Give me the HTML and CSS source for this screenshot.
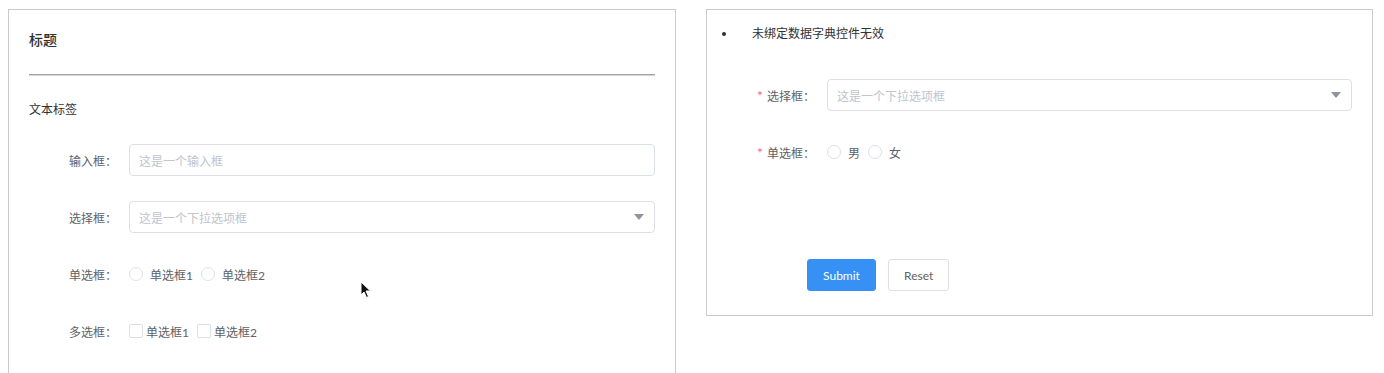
FILE: index.html
```
<!DOCTYPE html>
<html lang="zh-CN">
<head>
    <meta charset="UTF-8">
    <title>表单设计</title>
    <link rel="stylesheet" href="styles.css">
</head>
<body>
    <div class="page">
        <!-- Left: designer form -->
        <div class="panel panel-left">
            <div class="panel-title">标题</div>
            <div class="divider"></div>
            <div class="text-label">文本标签</div>

            <div class="form-item">
                <label class="form-label">输入框：</label>
                <div class="form-control">
                    <div class="input"><span class="placeholder">这是一个输入框</span></div>
                </div>
            </div>
            <div class="form-item">
                <label class="form-label">选择框：</label>
                <div class="form-control">
                    <div class="input select">
                        <span class="placeholder">这是一个下拉选项框</span>
                        <span class="caret"></span>
                    </div>
                </div>
            </div>
            <div class="form-item">
                <label class="form-label">单选框：</label>
                <div class="form-control">
                    <span class="radio"><span class="radio-dot"></span>单选框1</span>
                    <span class="radio"><span class="radio-dot"></span>单选框2</span>
                </div>
            </div>
            <div class="form-item">
                <label class="form-label">多选框：</label>
                <div class="form-control">
                    <span class="check"><span class="check-box"></span>单选框1</span>
                    <span class="check"><span class="check-box"></span>单选框2</span>
                </div>
            </div>
        </div>

        <!-- Right: preview -->
        <div class="panel panel-right">
            <ul class="notes">
                <li><span class="bullet"></span>未绑定数据字典控件无效</li>
            </ul>
            <div class="form-item">
                <label class="form-label"><span class="required">*</span>选择框：</label>
                <div class="form-control">
                    <div class="input select">
                        <span class="placeholder">这是一个下拉选项框</span>
                        <span class="caret"></span>
                    </div>
                </div>
            </div>
            <div class="form-item">
                <label class="form-label"><span class="required">*</span>单选框：</label>
                <div class="form-control">
                    <span class="radio"><span class="radio-dot"></span>男</span>
                    <span class="radio"><span class="radio-dot"></span>女</span>
                </div>
            </div>
            <div class="actions">
                <button class="btn btn-primary">Submit</button>
                <button class="btn">Reset</button>
            </div>
        </div>
    </div>

    <!-- mouse pointer captured in the screenshot -->
    <svg class="cursor" width="12" height="18" viewBox="0 0 12 18">
        <path d="M1 1 L1 14 L4 11 L6.5 16.5 L8.5 15.5 L6 10 L10.5 10 Z" fill="#111" stroke="#fff" stroke-width="1"/>
    </svg>
</body>
</html>
```

FILE: styles.css
```
/* General styling */
body {
    margin: 0;
    padding: 0;
    background-color: #ffffff;
    font-family: Lato, "Noto Sans CJK SC", sans-serif;
    font-size: 12px;
    color: #606266;
    overflow: hidden;
}
.page {
    display: flex;
    align-items: flex-start;
    padding: 9px 0 0 8px;
}
/* Panels */
.panel {
    border: 1px solid #cbcbcb;
    box-sizing: border-box;
}
.panel-left {
    width: 668px;
    padding: 20px 20px 40px 20px;
}
.panel-right {
    width: 667px;
    height: 307px;
    margin-left: 30px;
    padding: 14px 20px 24px 20px;
}
.panel-title {
    font-size: 14px;
    line-height: 20px;
    color: #303133;
    font-weight: 500;
}
.divider {
    border-top: 1px solid #a3a3a3;
    margin: 24px 0 0 0;
    height: 1px;
    background: #d6d6d6;
}
.text-label {
    margin-top: 24px;
    line-height: 20px;
    color: #303133;
}
/* Form rows */
.form-item {
    display: flex;
    align-items: center;
    height: 32px;
    margin-top: 24px;
}
.panel-left .form-item + .form-item {
    margin-top: 25px;
}
.form-label {
    width: 100px;
    box-sizing: border-box;
    text-align: right;
    padding-right: 12px;
    color: #606266;
    white-space: nowrap;
}
.required {
    color: #f56c6c;
    font-size: 14px;
    margin-right: 4px;
}
.form-control {
    flex: 1;
    display: flex;
    align-items: center;
}
.input {
    flex: 1;
    height: 32px;
    box-sizing: border-box;
    border: 1px solid #dcdfe6;
    border-radius: 4px;
    padding: 0 9px;
    display: flex;
    align-items: center;
}
.placeholder {
    color: #c0c4cc;
    flex: 1;
}
.caret {
    width: 0;
    height: 0;
    border-left: 5px solid transparent;
    border-right: 5px solid transparent;
    border-top: 6px solid #909399;
    margin-right: 1px;
}
/* Radios and checkboxes */
.radio {
    display: inline-flex;
    align-items: center;
    margin-right: 8px;
    color: #606266;
}
.radio-dot {
    width: 14px;
    height: 14px;
    box-sizing: border-box;
    border: 1px solid #dcdfe6;
    border-radius: 50%;
    margin-right: 7px;
}
.check {
    display: inline-flex;
    align-items: center;
    margin-right: 8px;
}
.check-box {
    width: 14px;
    height: 14px;
    box-sizing: border-box;
    border: 1px solid #dcdfe6;
    border-radius: 2px;
    margin-right: 3px;
}
/* Notes list */
.notes {
    list-style: none;
    margin: 0;
    padding: 0;
}
.notes li {
    display: flex;
    align-items: center;
    line-height: 20px;
    color: #303133;
}
.bullet {
    width: 4px;
    height: 4px;
    border-radius: 50%;
    background: #303133;
    margin: 0 26px 0 -5px;
}
.panel-right .form-item:first-of-type {
    margin-top: 35px;
}
.panel-right .form-item + .form-item {
    margin-top: 25px;
}
/* Buttons */
.actions {
    display: flex;
    margin: 91px 0 0 80px;
}
.btn {
    height: 32px;
    padding: 0 15px;
    font-family: Lato, "Noto Sans CJK SC", sans-serif;
    font-size: 12px;
    border: 1px solid #dcdfe6;
    border-radius: 3px;
    background: #ffffff;
    color: #606266;
    margin-right: 12px;
}
.btn-primary {
    background: #3790f4;
    border-color: #3790f4;
    color: #ffffff;
    width: 69px;
}
.cursor {
    position: absolute;
    left: 360px;
    top: 281px;
}
```
